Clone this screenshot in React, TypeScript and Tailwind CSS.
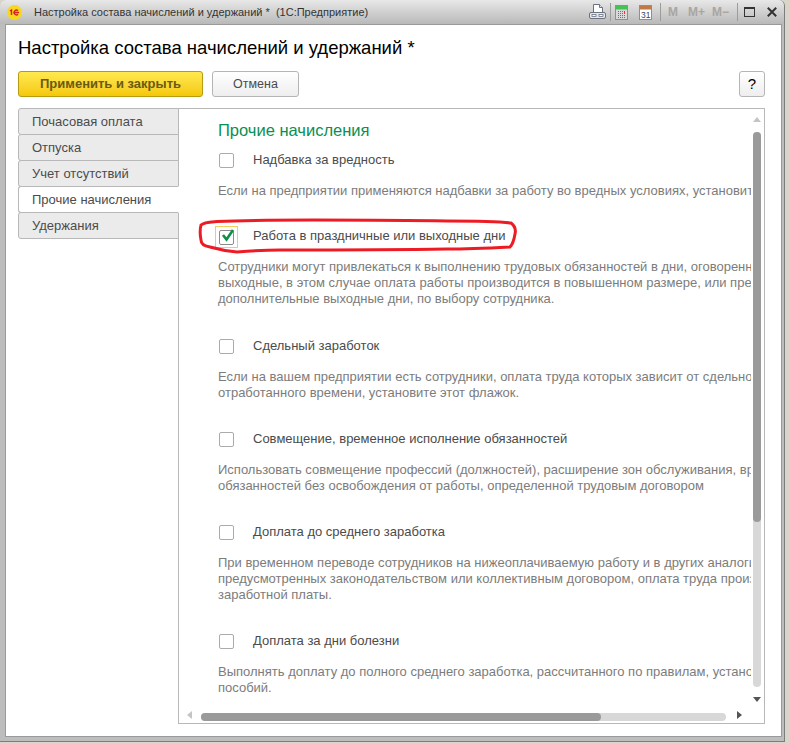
import React from "react";

function Item({ label, lines, cls, checked }: { label: string; lines: string[]; cls: string; checked?: boolean }) {
  return (
    <div className={cls}>
      <div className="relative flex h-[18px] items-center">
        {checked && <div className="absolute left-[-3px] top-[-1px] h-[22px] w-[23px] border border-[#f5cb5c]" />}
        <div className={`ml-px h-[15px] w-[15px] rounded-[2px] border bg-white ${checked ? "border-[#8c8c8c] translate-y-px" : "border-[#ababab]"}`} />
        {checked && (
          <svg className="absolute left-0 top-px" width="20" height="16" viewBox="0 0 20 16">
            <path d="M5 7 L8.5 11.5 L15 2" fill="none" stroke="#0d9048" strokeWidth="2.6" />
          </svg>
        )}
        <span className="ml-[19px] whitespace-nowrap text-[13px] text-[#4b4b4b]">{label}</span>
      </div>
      <div className="mt-[14px] whitespace-nowrap text-[13px] leading-[16px] text-[#7c7c7c]">
        {lines.map((l, i) => <div key={i}>{l}</div>)}
      </div>
    </div>
  );
}

function Tab({ t, active, first }: { t: string; active?: boolean; first?: boolean }) {
  return (
    <div className={`flex h-[27px] items-center rounded-l-[3px] border border-[#b8b8b8] pl-[13px] pt-px text-[13px] text-[#4b4b4b] ${first ? "" : "-mt-px"} ${active ? "relative border-r-white bg-white" : "bg-[#ebebeb]"}`}>{t}</div>
  );
}

function Sep() {
  return <div className="h-[18px] w-px bg-[#9c9c9c]" />;
}

export default function App() {
  return (
    <div className="relative h-[744px] w-[790px] overflow-hidden bg-[#d9d6c9] font-['Liberation_Sans',sans-serif]">
      <div className="flex h-[742px] w-[785px] flex-col overflow-hidden rounded-t-[6px] border-r border-b border-[#7d7d7d] bg-[#bdbdbd]">
        <div className="flex h-[24px] shrink-0 items-center bg-gradient-to-b from-[#e8e8e8] to-[#b9b9b9] pl-[7px] pr-[7px]">
          <svg width="15" height="15" viewBox="0 0 15 15">
            <circle cx="7.5" cy="7.5" r="7.5" fill="#f7d81f" />
            <path d="M3 6l1.5-1V10M11 5.6a2.4 2.4 0 1 0 0 3.8M7.5 7.5H12" fill="none" stroke="#d61f1f" strokeWidth="1.4" />
          </svg>
          <span className="ml-[12px] whitespace-pre text-[11px] text-[#333]">Настройка состава начислений и удержаний *  (1С:Предприятие)</span>
          <div className="ml-auto flex items-center">
            <svg width="17" height="16" viewBox="0 0 17 16">
              <path d="M4.5.5h6l3 3v5h-9z" fill="#fff" stroke="#6b7280" />
              <path d="M10.5.5v3h3" fill="#dfe3e8" stroke="#6b7280" />
              <rect x=".5" y="8.5" width="16" height="6" rx="1.5" fill="#e6e8ec" stroke="#6b7280" />
              <rect x="3" y="10.5" width="4" height="2" fill="#fff" stroke="#6b7280" strokeWidth=".8" />
              <rect x="10" y="10.5" width="4" height="2" fill="#fff" stroke="#6b7280" strokeWidth=".8" />
            </svg>
            <div className="mx-[4px]"><Sep /></div>
            <svg width="13" height="15" viewBox="0 0 13 15">
              <rect x=".5" y=".5" width="12" height="14" fill="#d9d9d9" stroke="#8a8f98" />
              <rect x="1" y="1" width="11" height="3.5" fill="#45c255" />
              <path d="M3 6.5h7M3 8.5h7M3 10.5h7M3 12.5h7" stroke="#6b7280" strokeDasharray="1 1" />
              <rect x="9" y="6" width="1" height="2" fill="#e33" />
            </svg>
            <svg className="ml-[11px]" width="13" height="15" viewBox="0 0 13 15">
              <rect x=".5" y=".5" width="12" height="14" fill="#fff" stroke="#8a8f98" />
              <rect x="1" y="1" width="11" height="3.5" fill="#c07a45" />
              <text x="2" y="13" fontSize="8.5" fill="#445" fontFamily="Liberation Sans">31</text>
            </svg>
            <div className="ml-[8px] mr-[7px]"><Sep /></div>
            <span className="text-[12px] font-bold text-[#aaa59f]">M</span>
            <span className="ml-[10px] text-[12px] font-bold text-[#aaa59f]">M+</span>
            <span className="ml-[7px] text-[12px] font-bold text-[#aaa59f]">M−</span>
            <div className="ml-[8px] mr-[6px]"><Sep /></div>
            <div className="h-[10px] w-[11px] border border-t-2 border-[#333]" />
            <svg className="ml-[12px]" width="10" height="10" viewBox="0 0 10 10">
              <path d="M.8.8l8.4 8.4M9.2.8L.8 9.2" stroke="#333" strokeWidth="2" />
            </svg>
          </div>
        </div>
        <div className="ml-[5px] mr-[2px] mb-[4px] flex min-h-0 flex-1 flex-col border border-[#9a9a9a] bg-white pl-[12px] pr-[16px]">
          <div className="mt-[12px] text-[18.5px] leading-[22px] text-black">Настройка состава начислений и удержаний *</div>
          <div className="mt-[12px] flex h-[26px] items-stretch">
            <div className="flex w-[185px] items-center justify-center rounded-[3px] border border-[#b79b10] bg-gradient-to-b from-[#ffe94d] to-[#f5c800] text-[13px] font-bold text-[#6b5a10]">Применить и закрыть</div>
            <div className="ml-[9px] flex w-[87px] items-center justify-center rounded-[3px] border border-[#b5b5b5] bg-gradient-to-b from-white to-[#eee] text-[12.5px] text-[#4b4b4b]">Отмена</div>
            <div className="ml-auto flex w-[26px] items-center justify-center rounded-[3px] border border-[#b5b5b5] bg-gradient-to-b from-white to-[#eee] text-[15px] text-black">?</div>
          </div>
          <div className="mt-[11px] flex h-[616px]">
            <div className="z-10 -mr-px flex w-[161px] shrink-0 flex-col">
              <Tab t="Почасовая оплата" first />
              <Tab t="Отпуска" />
              <Tab t="Учет отсутствий" />
              <Tab t="Прочие начисления" active />
              <Tab t="Удержания" />
            </div>
            <div className="relative flex-1 overflow-hidden border border-[#b8b8b8]">
              <div className="h-[590px] w-[572px] overflow-hidden pl-[39px] pt-[12px]">
                <div className="text-[16.5px] leading-[18px] text-[#0a8f52]">Прочие начисления</div>
                <Item cls="mt-[12px]" label="Надбавка за вредность" lines={["Если на предприятии применяются надбавки за работу во вредных условиях, установите этот флажок."]} />
                <Item cls="mt-[28px]" checked label="Работа в праздничные или выходные дни" lines={["Сотрудники могут привлекаться к выполнению трудовых обязанностей в дни, оговоренные", "выходные, в этом случае оплата работы производится в повышенном размере, или предоставляются", "дополнительные выходные дни, по выбору сотрудника."]} />
                <Item cls="mt-[30px]" label="Сдельный заработок" lines={["Если на вашем предприятии есть сотрудники, оплата труда которых зависит от сдельной", "отработанного времени, установите этот флажок."]} />
                <Item cls="mt-[29px]" label="Совмещение, временное исполнение обязанностей" lines={["Использовать совмещение профессий (должностей), расширение зон обслуживания, время", "обязанностей без освобождения от работы, определенной трудовым договором"]} />
                <Item cls="mt-[29px]" label="Доплата до среднего заработка" lines={["При временном переводе сотрудников на нижеоплачиваемую работу и в других аналогичных", "предусмотренных законодательством или коллективным договором, оплата труда производится", "заработной платы."]} />
                <Item cls="mt-[29px]" label="Доплата за дни болезни" lines={["Выполнять доплату до полного среднего заработка, рассчитанного по правилам, установленным", "пособий."]} />
              </div>
              <div className="absolute right-[3px] top-[23px] h-[555px] w-[8px] rounded-full bg-[#d8d8d8]"><div className="h-[390px] w-full rounded-full bg-[#9a9a9a]" /></div>
              <div className="absolute bottom-[2px] left-[22px] h-[8px] w-[525px] rounded-full bg-[#d8d8d8]"><div className="h-full w-[400px] rounded-full bg-[#9a9a9a]" /></div>
              <svg className="absolute right-[3px] top-[8px]" width="8" height="5" viewBox="0 0 8 5"><path d="M4 0l4 5H0z" fill="#c4c4c4" /></svg>
              <svg className="absolute right-[3px] top-[588px]" width="8" height="5" viewBox="0 0 8 5"><path d="M4 5l4-5H0z" fill="#555" /></svg>
              <svg className="absolute bottom-[4px] left-[8px]" width="5" height="8" viewBox="0 0 5 8"><path d="M0 4l5-4v8z" fill="#c4c4c4" /></svg>
              <svg className="absolute bottom-[4px] left-[558px]" width="5" height="8" viewBox="0 0 5 8"><path d="M5 4L0 0v8z" fill="#555" /></svg>
            </div>
          </div>
        </div>
      </div>
      <svg className="pointer-events-none absolute left-0 top-0" width="790" height="744" viewBox="0 0 790 744">
        <path d="M201 225 C204 222 210 222 217 221.5 C250 220 285 220 313 220 C360 220 400 220 447 221 C470 221 495 221 511 223 C515 226 516 230 515 234 C514 240 513 244 510 247 C490 248 470 249 447 249 C390 250 335 250 280 250 C265 250 250 251 237 252 C225 251 217 249 210 247 C204 246 201 244 201 240 C200 235 200 229 201 225 Z" fill="none" stroke="#ed1c24" strokeWidth="3" />
      </svg>
    </div>
  );
}
